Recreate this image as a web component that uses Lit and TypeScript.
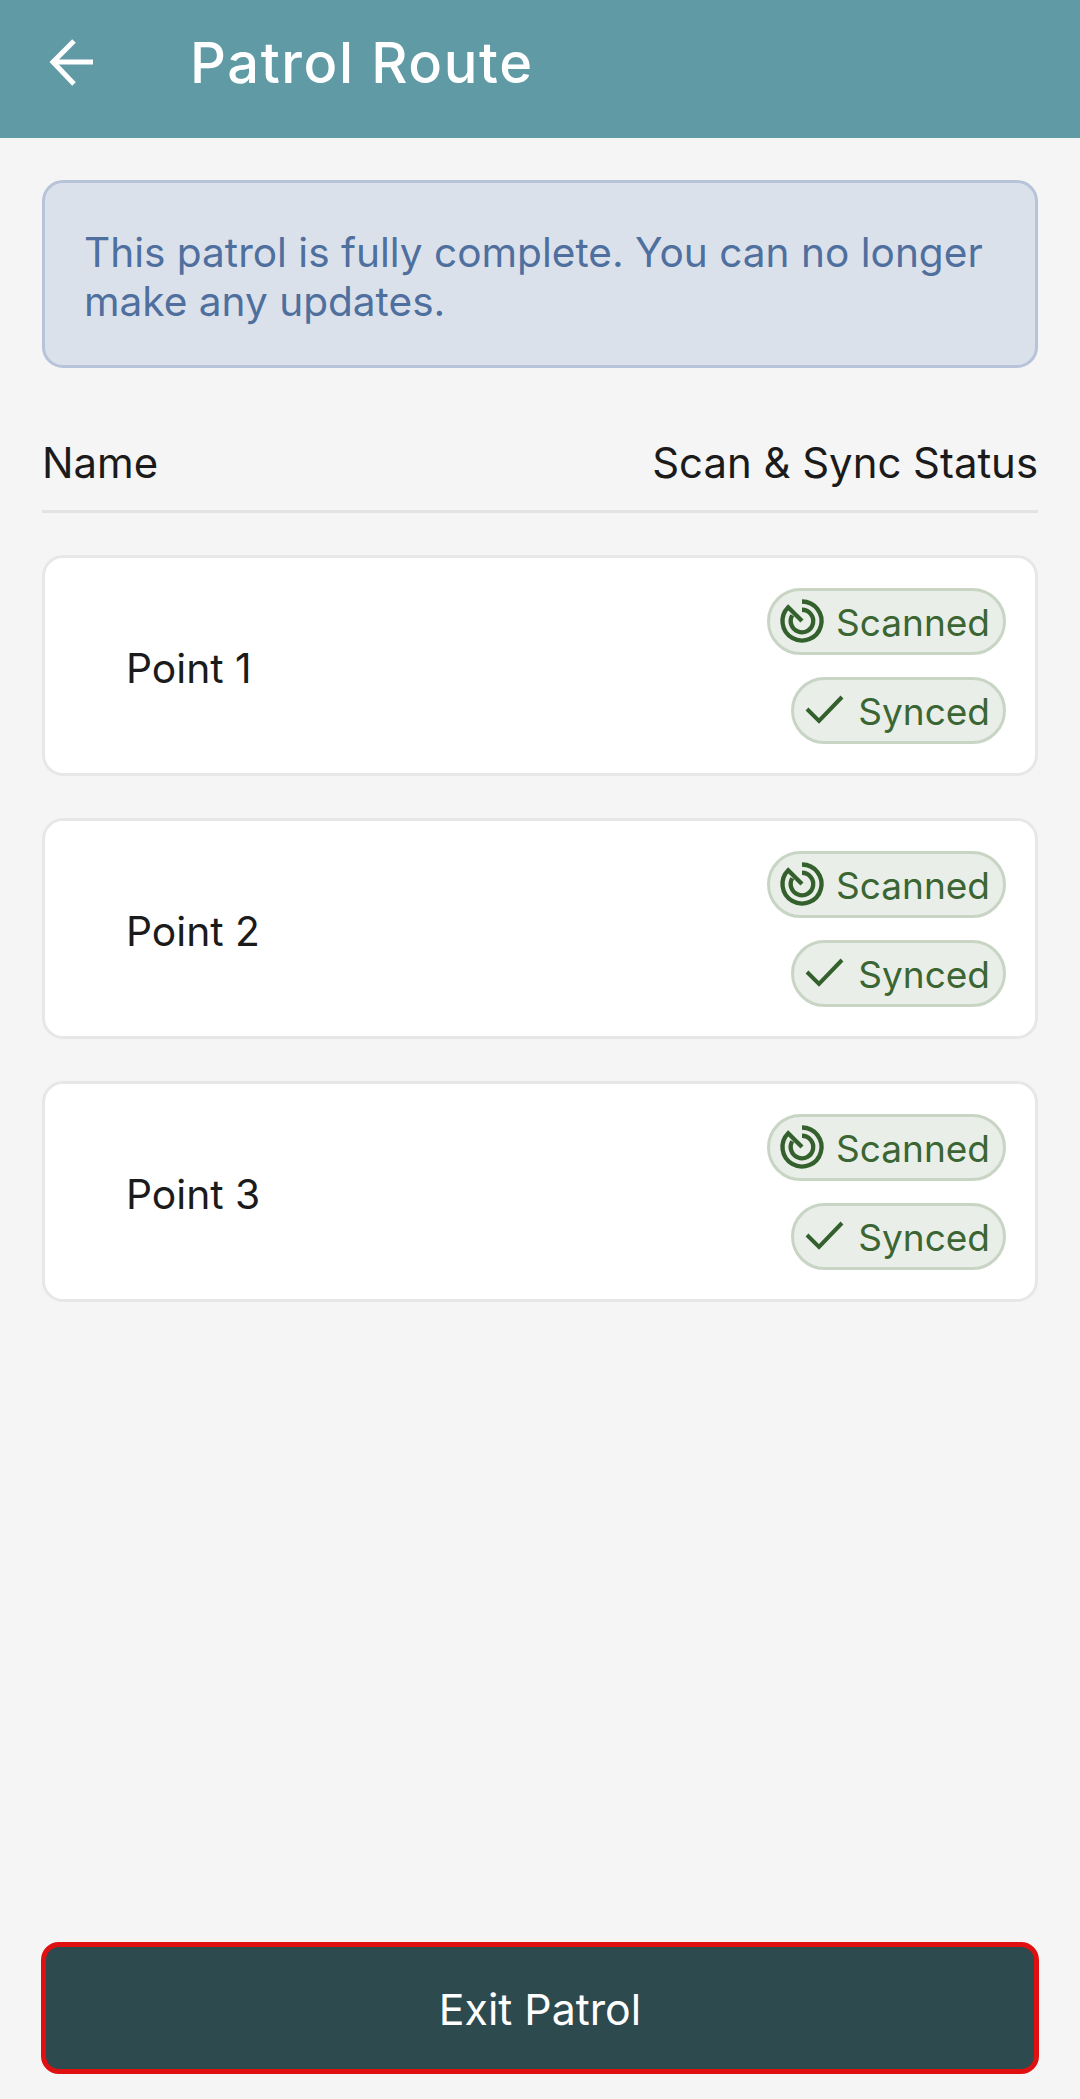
import { LitElement, html, css } from "lit";
import { customElement } from "lit/decorators.js";

const points = ["Point 1", "Point 2", "Point 3"];

@customElement("app-root")
export class AppRoot extends LitElement {
  static styles = css`
    :host { display: block; width: 1080px; height: 2099px; background: #f5f5f5; font-family: "Inter", "Liberation Sans", sans-serif; color: #1b1b1b; }
    * { box-sizing: border-box; }
    .page { height: 2099px; display: flex; flex-direction: column; }
    .bar { height: 138px; background: #5f9aa5; display: flex; align-items: center; color: #fff; padding: 0 0 12px 48px; flex: none; }
    .bar svg { width: 46px; height: 50px; flex: none; }
    .title { margin-left: 96px; font-size: 56px; font-weight: 500; letter-spacing: 1.6px; line-height: 1; }
    .content { flex: 1; padding: 42px 42px 0; display: flex; flex-direction: column; }
    .alert { height: 188px; background: #dbe1ea; border: 3px solid #b6c3d8; border-radius: 21px; padding: 45px 39px 0; color: #4f6f9e; font-size: 40.6px; line-height: 49px; }
    .heads { display: flex; justify-content: space-between; font-size: 41.9px; line-height: 48px; margin-top: 71px; padding-bottom: 23px; border-bottom: 3px solid #e2e3e3; }
    .list { display: flex; flex-direction: column; gap: 42px; margin-top: 42px; }
    .card { height: 221px; background: #fff; border: 3px solid #e6e7e7; border-radius: 21px; display: flex; justify-content: space-between; align-items: center; padding: 0 29px 0 81px; }
    .name { font-size: 40.8px; margin-top: 4px; }
    .tags { display: flex; flex-direction: column; align-items: flex-end; gap: 22px; }
    .tag { height: 67px; border: 3px solid #c8d5c5; background: #e9efe8; border-radius: 34px; display: flex; align-items: center; color: #3b6633; font-size: 37px; padding: 0 13px 0 6px; gap: 8px; }
    .tag span { margin-top: 3px; }
    .tag.synced { padding-left: 7px; gap: 11px; }
    .tag svg { flex: none; }
    .foot { padding: 0 41px 25px; flex: none; }
    .exit { height: 132px; width: 100%; display: flex; align-items: center; justify-content: center; background: #2d4a4f; border: 5px solid #e01010; border-radius: 18px; color: #fff; font: inherit; font-size: 42.8px; padding: 3px 0 0; }
  `;

  private radar() {
    return html`<svg width="52" height="52" viewBox="0 0 24 24" fill="none" stroke="#33602d" stroke-width="2"><g transform="rotate(-45 12 12)"><path d="M18.36 5.64A9 9 0 1 1 12 3V12"/><path d="M15.68 8.32A5.2 5.2 0 1 1 10.7 6.95"/></g></svg>`;
  }

  private check() {
    return html`<svg width="46" height="46" viewBox="0 0 46 46" fill="none" stroke="#33602d" stroke-width="4"><path d="M6 22L18 34L41 10"/></svg>`;
  }

  render() {
    return html`<div class="page">
      <header class="bar">
        <svg viewBox="0 0 46 50" fill="none" stroke="#fff" stroke-width="5"><path d="M45 24H7M26 3L5 24L26 46"/></svg>
        <div class="title">Patrol Route</div>
      </header>
      <main class="content">
        <div class="alert">This patrol is fully complete. You can no longer make any updates.</div>
        <div class="heads"><span>Name</span><span>Scan &amp; Sync Status</span></div>
        <div class="list">
          ${points.map((p) => html`<div class="card">
            <div class="name">${p}</div>
            <div class="tags">
              <div class="tag">${this.radar()}<span>Scanned</span></div>
              <div class="tag synced">${this.check()}<span>Synced</span></div>
            </div>
          </div>`)}
        </div>
      </main>
      <footer class="foot"><button class="exit">Exit Patrol</button></footer>
    </div>`;
  }
}
